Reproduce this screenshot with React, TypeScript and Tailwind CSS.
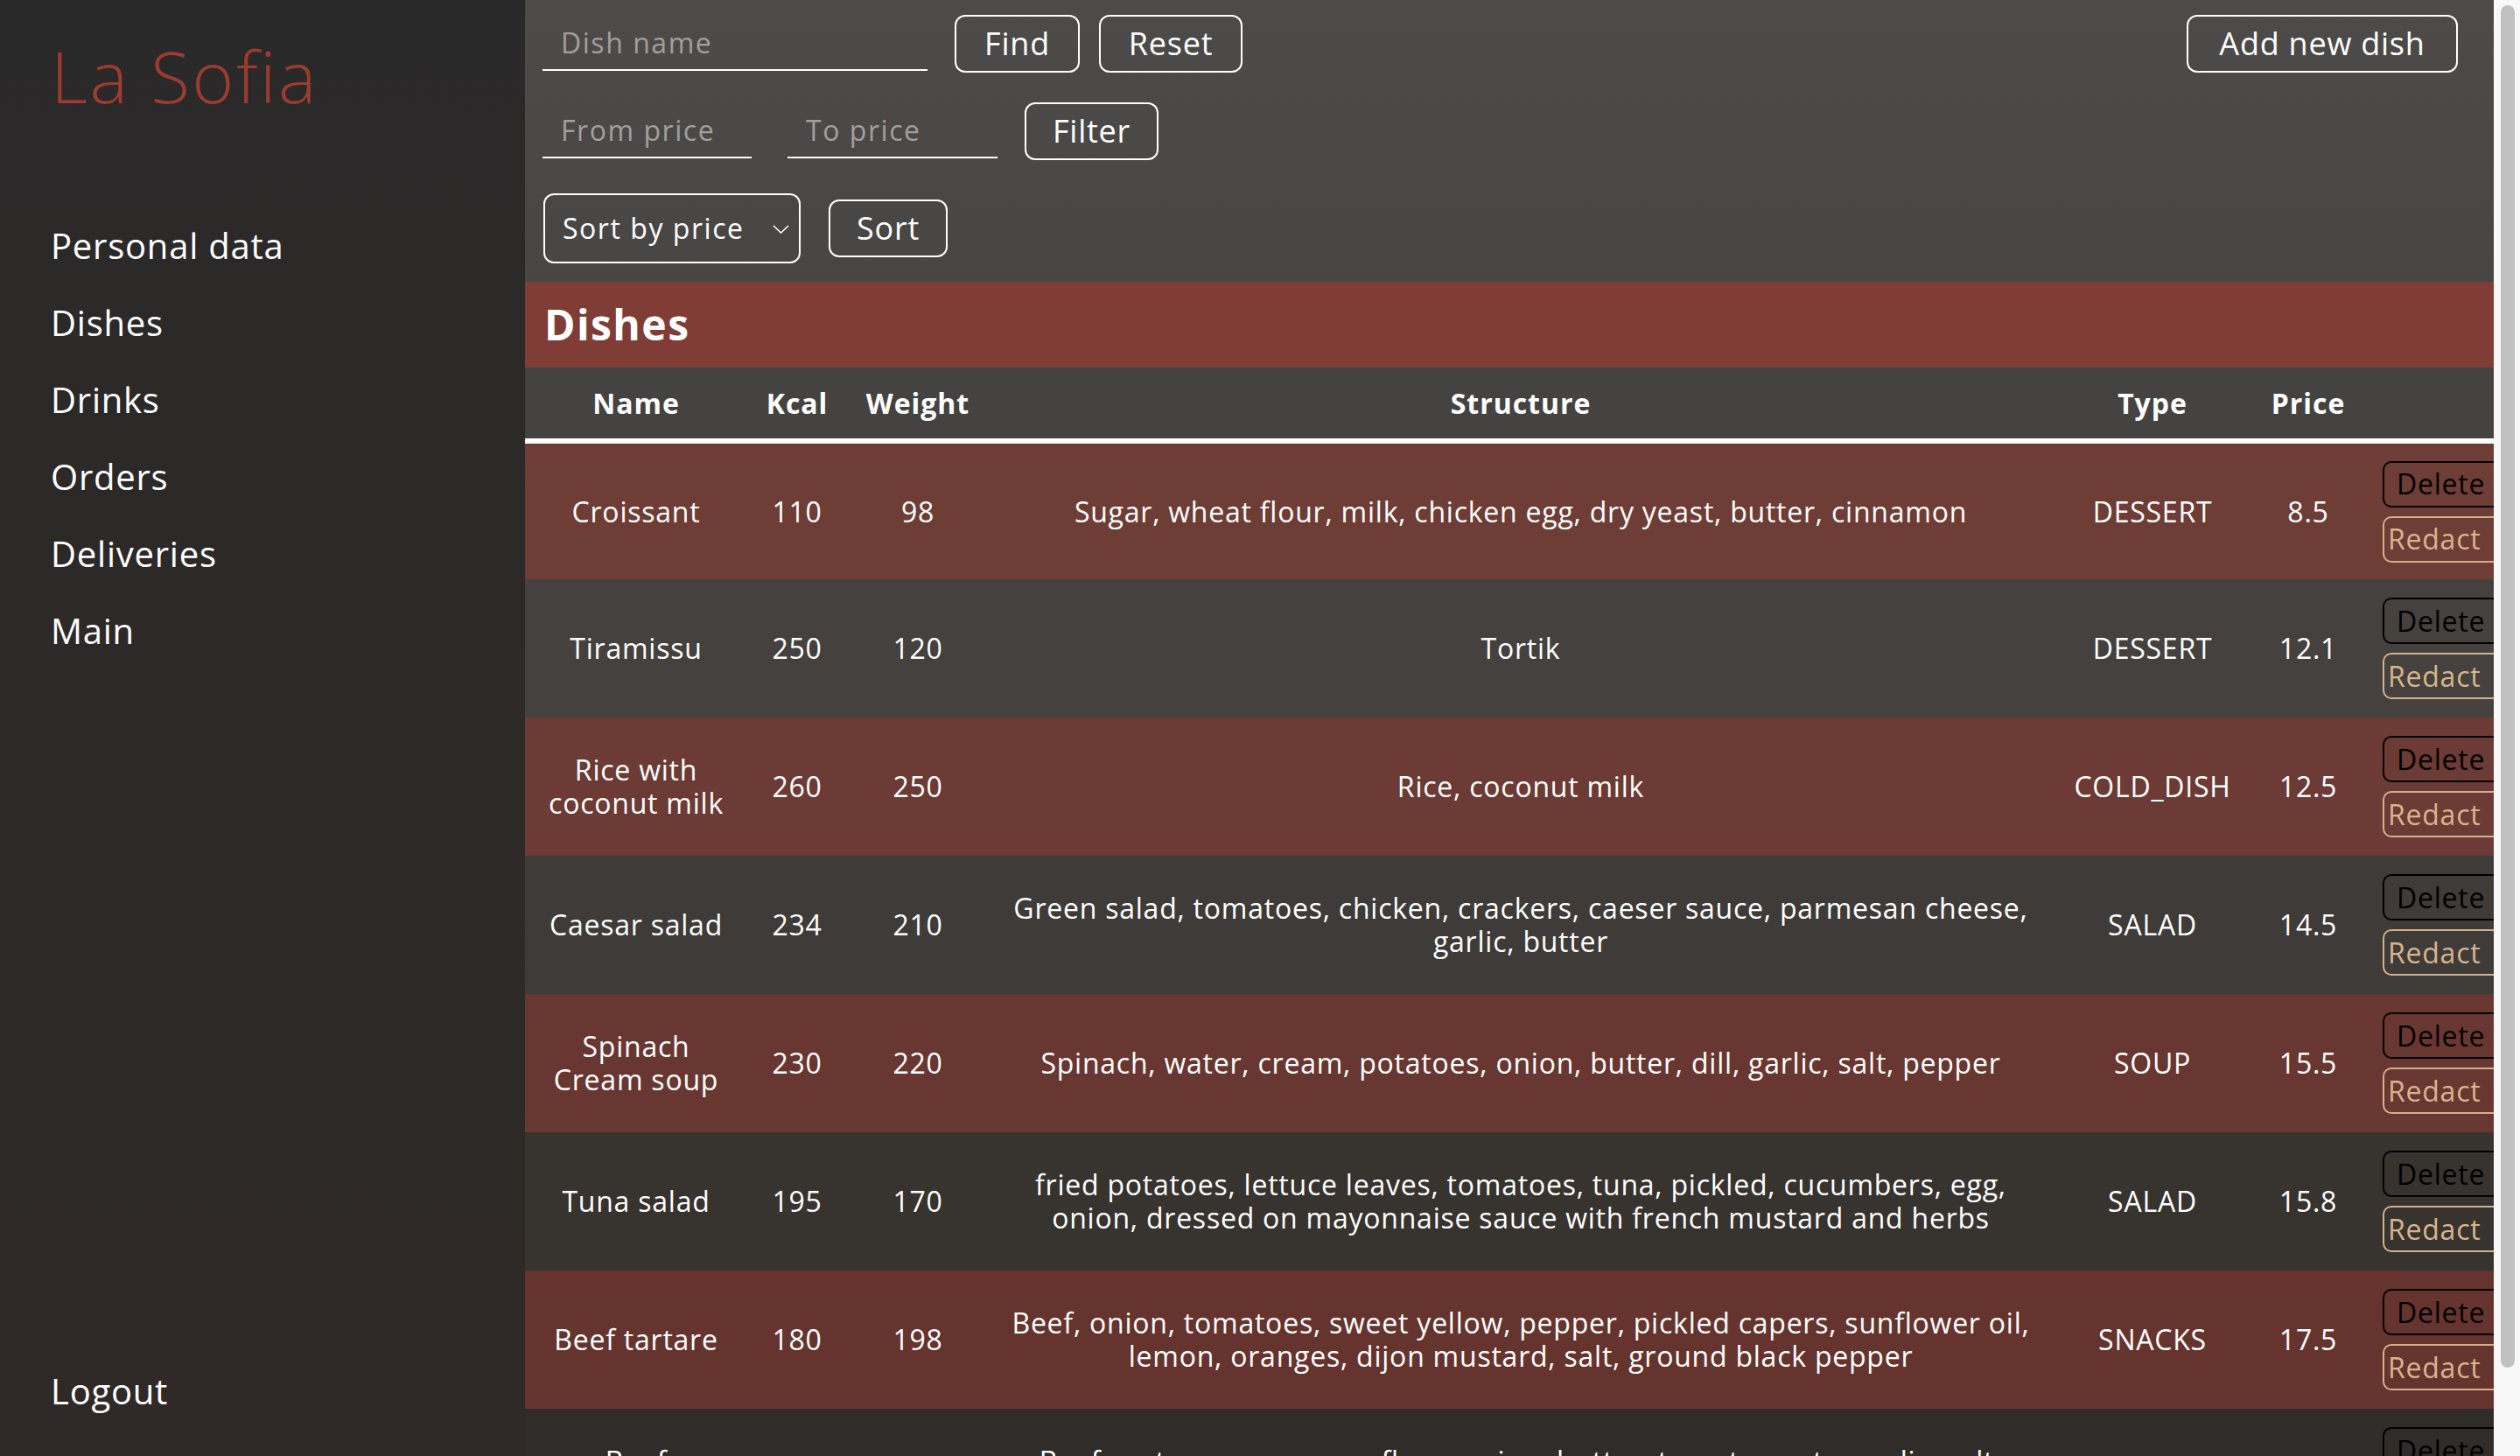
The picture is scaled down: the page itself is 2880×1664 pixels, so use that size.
import React from "react";

type Dish = {
  name: string;
  kcal: number;
  weight: number;
  structure: string;
  type: string;
  price: string;
  bg: string;
};

const dishes: Dish[] = [
  {
    name: "Croissant",
    kcal: 110,
    weight: 98,
    structure: "Sugar, wheat flour, milk, chicken egg, dry yeast, butter, cinnamon",
    type: "DESSERT",
    price: "8.5",
    bg: "bg-[#6e3d36]",
  },
  {
    name: "Tiramissu",
    kcal: 250,
    weight: 120,
    structure: "Tortik",
    type: "DESSERT",
    price: "12.1",
    bg: "bg-[#44413e]",
  },
  {
    name: "Rice with\ncoconut milk",
    kcal: 260,
    weight: 250,
    structure: "Rice, coconut milk",
    type: "COLD_DISH",
    price: "12.5",
    bg: "bg-[#6c3b35]",
  },
  {
    name: "Caesar salad",
    kcal: 234,
    weight: 210,
    structure:
      "Green salad, tomatoes, chicken, crackers, caeser sauce, parmesan cheese,\ngarlic, butter",
    type: "SALAD",
    price: "14.5",
    bg: "bg-[#3e3b38]",
  },
  {
    name: "Spinach\nCream soup",
    kcal: 230,
    weight: 220,
    structure: "Spinach, water, cream, potatoes, onion, butter, dill, garlic, salt, pepper",
    type: "SOUP",
    price: "15.5",
    bg: "bg-[#693731]",
  },
  {
    name: "Tuna salad",
    kcal: 195,
    weight: 170,
    structure:
      "fried potatoes, lettuce leaves, tomatoes, tuna, pickled, cucumbers, egg,\nonion, dressed on mayonnaise sauce with french mustard and herbs",
    type: "SALAD",
    price: "15.8",
    bg: "bg-[#37332f]",
  },
  {
    name: "Beef tartare",
    kcal: 180,
    weight: 198,
    structure:
      "Beef, onion, tomatoes, sweet yellow, pepper, pickled capers, sunflower oil,\nlemon, oranges, dijon mustard, salt, ground black pepper",
    type: "SNACKS",
    price: "17.5",
    bg: "bg-[#66342e]",
  },
  {
    name: "Beef\nStroganoff",
    kcal: 320,
    weight: 250,
    structure:
      "Beef, water, sour cream, flour, onion, butter, tomato paste, garlic, salt,\npepper, bay leaf",
    type: "HOT_DISH",
    price: "19.5",
    bg: "bg-[#302c29]",
  },
];

const navItems = ["Personal data", "Dishes", "Drinks", "Orders", "Deliveries", "Main"];

function OutlineButton({ label, width }: { label: string; width: string }) {
  return (
    <button
      className={`${width} h-[66px] shrink-0 rounded-[12px] border-2 border-white text-[36px] text-white`}
    >
      {label}
    </button>
  );
}

function Sidebar() {
  return (
    <aside className="flex h-full w-[600px] shrink-0 flex-col bg-linear-to-b from-[#2a2929] to-[#2f2a27] pl-[58px]">
      <div className="pt-[45px] text-[82px] font-light leading-none tracking-[0.03em] text-[#9d3b2f]">
        La Sofia
      </div>
      <nav className="mt-[110px] flex flex-col">
        {navItems.map((item) => (
          <a key={item} className="text-[40px] leading-[88px] text-white">
            {item}
          </a>
        ))}
      </nav>
      <a className="mt-auto pb-[30px] text-[40px] leading-[88px] text-white">Logout</a>
    </aside>
  );
}

function Toolbar() {
  const inputCls =
    "h-[64px] shrink-0 border-b-2 border-white bg-transparent pl-[21px] text-[32px] tracking-[0.048em] text-white outline-none placeholder:text-[#a29f9c]";

  return (
    <div className="flex flex-col bg-linear-to-b from-[#4d4b49] to-[#484644] pb-[21px] pl-[20px] pr-[41px] pt-[17px]">
      {/* search */}
      <div className="flex items-start">
        <input className={`${inputCls} w-[440px]`} placeholder="Dish name" />
        <div className="ml-[31px]">
          <OutlineButton label="Find" width="w-[143px]" />
        </div>
        <div className="ml-[22px]">
          <OutlineButton label="Reset" width="w-[164px]" />
        </div>
        <div className="ml-auto">
          <OutlineButton label="Add new dish" width="w-[310px]" />
        </div>
      </div>

      {/* price filter */}
      <div className="mt-[34px] flex items-start">
        <input className={`${inputCls} w-[239px]`} placeholder="From price" />
        <input className={`${inputCls} ml-[41px] w-[240px]`} placeholder="To price" />
        <div className="ml-[31px]">
          <OutlineButton label="Filter" width="w-[153px]" />
        </div>
      </div>

      {/* sort */}
      <div className="mt-[38px] flex items-center">
        <div className="relative ml-[1px] h-[80px] w-[294px]">
          <select className="h-full w-full appearance-none rounded-[12px] border-2 border-white bg-transparent pl-[20px] text-[32px] tracking-[0.048em] text-white outline-none">
            <option className="text-black">Sort by price</option>
          </select>
          <svg
            className="pointer-events-none absolute right-[13px] top-[36px] h-[10px] w-[19px]"
            viewBox="0 0 19 10"
            fill="none"
            stroke="#ffffff"
            strokeWidth={1.6}
          >
            <path d="M1 1l8.5 8 8.5-8" />
          </svg>
        </div>
        <div className="ml-[32px]">
          <OutlineButton label="Sort" width="w-[136px]" />
        </div>
      </div>
    </div>
  );
}

function DishesTable() {
  const th =
    "border-b-[6px] border-white text-center text-[32px] font-bold tracking-[0.03em] text-white";
  const td = "px-[20px] text-center text-[32px] leading-[38px] text-white whitespace-pre-line";

  return (
    <table className="w-[2300px] table-fixed border-collapse">
      <colgroup>
        <col className="w-[254px]" />
        <col className="w-[114px]" />
        <col className="w-[162px]" />
        <col className="w-[1216px]" />
        <col className="w-[228px]" />
        <col className="w-[128px]" />
        <col className="w-[198px]" />
      </colgroup>
      <thead>
        <tr className="h-[84px] bg-[#454341]">
          <th className={th}>Name</th>
          <th className={th}>Kcal</th>
          <th className={th}>Weight</th>
          <th className={th}>Structure</th>
          <th className={th}>Type</th>
          <th className={th}>Price</th>
          <th className={th}></th>
        </tr>
      </thead>
      <tbody>
        {dishes.map((d) => (
          <tr key={d.name} className={`h-[158px] ${d.bg}`}>
            <td className={td}>{d.name}</td>
            <td className={td}>{d.kcal}</td>
            <td className={td}>{d.weight}</td>
            <td className={td}>{d.structure}</td>
            <td className={td}>{d.type}</td>
            <td className={td}>{d.price}</td>
            <td className="pl-[21px]">
              <div className="flex flex-col gap-[10px]">
                <button className="h-[53px] w-[140px] rounded-[10px] border-2 border-black pl-[14px] text-left text-[32px] text-black">
                  Delete
                </button>
                <button className="h-[53px] w-[140px] rounded-[10px] border-2 border-[#d4b08a] pl-[4px] text-left text-[32px] text-[#d8b48e]">
                  Redact
                </button>
              </div>
            </td>
          </tr>
        ))}
      </tbody>
    </table>
  );
}

export default function App() {
  return (
    <div className="flex h-screen w-full overflow-hidden font-['Open_Sans',sans-serif] tracking-[0.048em]">
      <Sidebar />
      <main className="flex min-w-0 flex-1 flex-col overflow-hidden bg-[#302c29]">
        <Toolbar />
        <div className="flex h-[98px] shrink-0 items-center bg-[#7f3d35] pl-[22px] text-[48px] font-bold tracking-[0.03em] text-white">
          Dishes
        </div>
        <DishesTable />
      </main>
      {/* page scrollbar */}
      <div className="h-full w-[30px] shrink-0 bg-[#f8f8f8] pl-[8px] pt-[6px]">
        <div className="h-[1557px] w-[16px] rounded-full bg-[#c1c1c1]" />
      </div>
    </div>
  );
}
